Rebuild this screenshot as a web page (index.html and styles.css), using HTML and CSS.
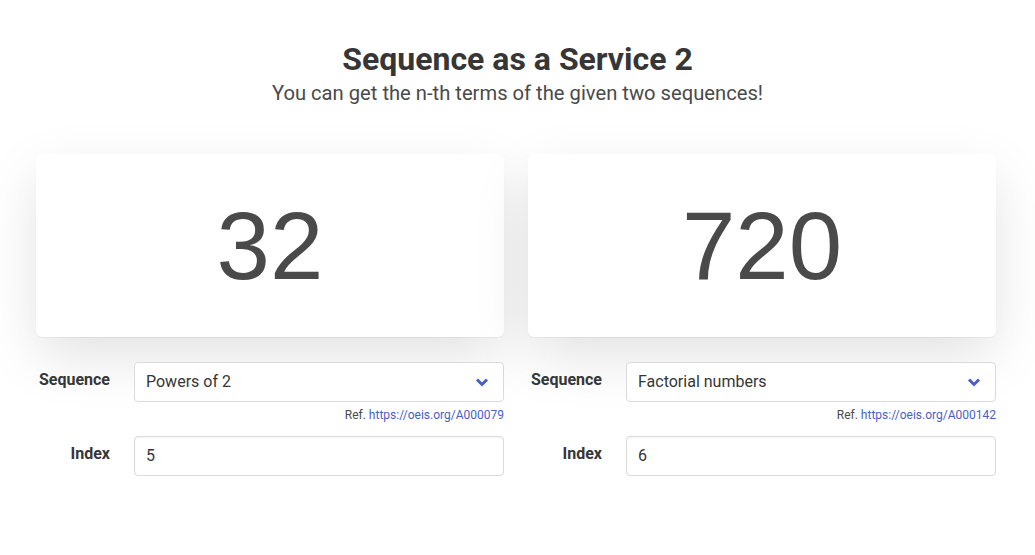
FILE: index.html
```html
<!DOCTYPE html>
<html lang="en">
<head>
<meta charset="utf-8">
<title>Sequence as a Service 2</title>
<link rel="stylesheet" href="styles.css">
</head>
<body>
<header class="hero">
  <h1 class="title">Sequence as a Service 2</h1>
  <p class="subtitle">You can get the n-th terms of the given two sequences!</p>
</header>
<main class="columns">
  <section class="column">
    <div class="box"><span class="value">32</span></div>
    <div class="field">
      <div class="field-label"><label>Sequence</label></div>
      <div class="field-body">
        <div class="select">
          <span>Powers of 2</span>
          <svg class="chevron" width="14" height="10" viewBox="0 0 14 10"><path d="M2 2.5 L7 7.5 L12 2.5" fill="none" stroke="#485fc7" stroke-width="3"/></svg>
        </div>
        <p class="help">Ref. <a href="#">https://oeis.org/A000079</a></p>
      </div>
    </div>
    <div class="field">
      <div class="field-label"><label>Index</label></div>
      <div class="field-body">
        <div class="input">5</div>
      </div>
    </div>
  </section>
  <section class="column">
    <div class="box"><span class="value">720</span></div>
    <div class="field">
      <div class="field-label"><label>Sequence</label></div>
      <div class="field-body">
        <div class="select">
          <span>Factorial numbers</span>
          <svg class="chevron" width="14" height="10" viewBox="0 0 14 10"><path d="M2 2.5 L7 7.5 L12 2.5" fill="none" stroke="#485fc7" stroke-width="3"/></svg>
        </div>
        <p class="help">Ref. <a href="#">https://oeis.org/A000142</a></p>
      </div>
    </div>
    <div class="field">
      <div class="field-label"><label>Index</label></div>
      <div class="field-body">
        <div class="input">6</div>
      </div>
    </div>
  </section>
</main>
</body>
</html>
```
FILE: styles.css
```css
* { box-sizing: border-box; }
html, body { margin: 0; padding: 0; background: #fff; }
body {
  font-family: Roboto, "Liberation Sans", Arial, sans-serif;
  color: #4a4a4a;
  font-size: 16px;
  line-height: 1.5;
}
.hero {
  text-align: center;
  padding-top: 41px;
}
.title {
  margin: 0;
  font-size: 32px;
  line-height: 36px;
  font-weight: 700;
  color: #363636;
}
.subtitle {
  margin: 3px 0 0;
  font-size: 20.2px;
  line-height: 26px;
  color: #4a4a4a;
}
.columns {
  margin: 48px 39px 0 36px;
  display: grid;
  grid-template-columns: 1fr 1fr;
  column-gap: 24px;
}
.box {
  background: #fff;
  border-radius: 6px;
  box-shadow: 0 20px 60px -4px rgba(10,10,10,0.13), 0 1px 1px rgba(10,10,10,0.05);
  padding: 20px;
  text-align: center;
  margin-bottom: 25px;
}
.value {
  font-family: "Liberation Sans", Arial, sans-serif;
  font-size: 96px;
  line-height: 143px;
  color: #4a4a4a;
}
.field {
  display: flex;
  margin-bottom: 12px;
}
.field-label {
  flex: 1 1 0;
  margin-right: 24px;
  text-align: right;
  padding-top: 6px;
}
.field-label label {
  font-weight: 700;
  color: #363636;
  font-size: 16px;
}
.field-body {
  flex: 5 1 0;
}
.select, .input {
  height: 40px;
  border: 1px solid #dbdbdb;
  border-radius: 4px;
  background: #fff;
  padding: 7px 11px;
  font-size: 16px;
  line-height: 24px;
  color: #363636;
  box-shadow: inset 0 1px 2px rgba(10,10,10,0.05);
}
.select {
  display: flex;
  align-items: center;
  justify-content: space-between;
  box-shadow: none;
}
.chevron { margin-right: 3px; }
.help {
  margin: 4px 0 0;
  font-size: 12px;
  line-height: 18px;
  text-align: right;
  color: #4a4a4a;
}
.help a { color: #485fc7; text-decoration: none; }
```
